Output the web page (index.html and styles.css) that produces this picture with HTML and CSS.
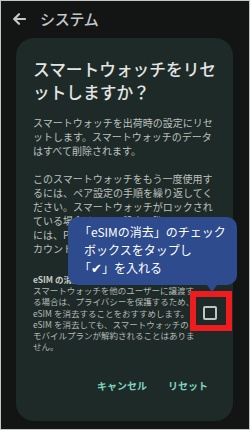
FILE: index.html
```html
<!DOCTYPE html>
<html lang="ja">
<head>
<meta charset="utf-8">
<title>システム</title>
<link rel="stylesheet" href="styles.css">
</head>
<body>
<div class="screen">
  <header class="topbar">
    <svg class="back" width="14" height="12" viewBox="0 0 14 12"><path d="M13 6H2.5M7 1.2L2.2 6L7 10.8" fill="none" stroke="#c3c7c5" stroke-width="2.2" stroke-linecap="round" stroke-linejoin="round"/></svg>
    <span class="topbar-title">システム</span>
  </header>
  <section class="dialog">
    <h1 class="dialog-title">スマートウォッチをリセ<br>ットしますか？</h1>
    <p class="dialog-text">スマートウォッチを出荷時の設定にリセ<br>ットします。スマートウォッチのデータ<br>はすべて削除されます。</p>
    <p class="dialog-text second">このスマートウォッチをもう一度使用す<br>るには、ペア設定の手順を繰り返してく<br>ださい。スマートウォッチがロックされ<br>ている場合は、ペア設定の際にスマート<br>には、Pixel Watch アプリで Google ア<br>カウントへのログインが必要になります。</p>
    <div class="esim">
      <div class="esim-text">
        <div class="esim-head">eSIM の消去</div>
        スマートウォッチを他のユーザーに譲渡す<br>る場合は、プライバシーを保護するため、<br>eSIM を消去することをおすすめします。<br>eSIM を消去しても、スマートウォッチの<br>モバイルプランが解約されることはありま<br>せん。
      </div>
      <div class="check-wrap">
        <span class="checkbox"></span>
        <span class="highlight"></span>
      </div>
    </div>
    <div class="actions">
      <span class="action">キャンセル</span>
      <span class="action">リセット</span>
    </div>
  </section>
  <div class="callout">「eSIMの消去」のチェック<br><span class="indent">ボックスをタップし</span><br>「<span class="tick">✔</span>」を入れる</div>
</div>
</body>
</html>
```
FILE: styles.css
```css
html, body {
  margin: 0;
  padding: 0;
  background: #141615;
}
.screen {
  position: relative;
  box-sizing: border-box;
  width: 250px;
  height: 430px;
  border: 1px solid #c4c6c5;
  background: #131514;
  font-family: "Noto Sans CJK JP", "Noto Sans", sans-serif;
  overflow: hidden;
}
.topbar {
  height: 35px;
  display: flex;
  align-items: center;
  padding-left: 11px;
  gap: 14px;
}
.back { display: block; }
.topbar-title {
  font-size: 15px;
  font-weight: 500;
  color: #c3c7c5;
  letter-spacing: -0.3px;
}
.dialog {
  margin: 2px 0 0 15px;
  width: 217px;
  height: 383px;
  box-sizing: border-box;
  padding: 20px 16px 28px 17px;
  background: #1e2a27;
  border-radius: 18px;
  display: flex;
  flex-direction: column;
}
.dialog-title {
  margin: 0;
  font-size: 16.7px;
  line-height: 23px;
  font-weight: 500;
  color: #e2e5e3;
  white-space: nowrap;
}
.dialog-text {
  margin: 12px 0 0;
  font-size: 10px;
  line-height: 14px;
  color: #bdc1bf;
  white-space: nowrap;
}
.dialog-text.second { margin-top: 14px; }
.esim {
  margin-top: 18px;
  display: flex;
  align-items: center;
  justify-content: space-between;
}
.esim-text {
  font-size: 8.5px;
  line-height: 11.2px;
  color: #b3b8b6;
  white-space: nowrap;
}
.esim-head {
  font-weight: 700;
  color: #c6cac8;
}
.check-wrap {
  position: relative;
  width: 14px;
  height: 14px;
  flex: none;
}
.checkbox {
  display: block;
  box-sizing: border-box;
  width: 14px;
  height: 14px;
  border: 2px solid #c0c5c3;
  border-radius: 2px;
}
.highlight {
  position: absolute;
  left: -13px;
  top: -15px;
  width: 42px;
  height: 40px;
  box-sizing: border-box;
  border: 6px solid #ee1c1f;
}
.actions {
  margin-top: auto;
  margin-right: 9px;
  display: flex;
  justify-content: flex-end;
  gap: 21px;
}
.action {
  font-size: 10px;
  line-height: 14px;
  font-weight: 700;
  color: #7fd4c2;
}
.callout {
  position: absolute;
  left: 67px;
  top: 216px;
  width: 169px;
  height: 68px;
  box-sizing: border-box;
  padding: 6px 0 0 11px;
  background: #2d4b8d;
  border-radius: 10px;
  color: #ffffff;
  font-size: 12px;
  line-height: 18px;
  white-space: nowrap;
}
.callout::after {
  content: "";
  position: absolute;
  left: 139px;
  bottom: -7px;
  border-left: 5px solid transparent;
  border-right: 5px solid transparent;
  border-top: 7px solid #2d4b8d;
}
.indent {
  margin-left: 5px;
}
.tick {
  font-family: "DejaVu Sans", sans-serif;
  font-size: 13px;
}
```
